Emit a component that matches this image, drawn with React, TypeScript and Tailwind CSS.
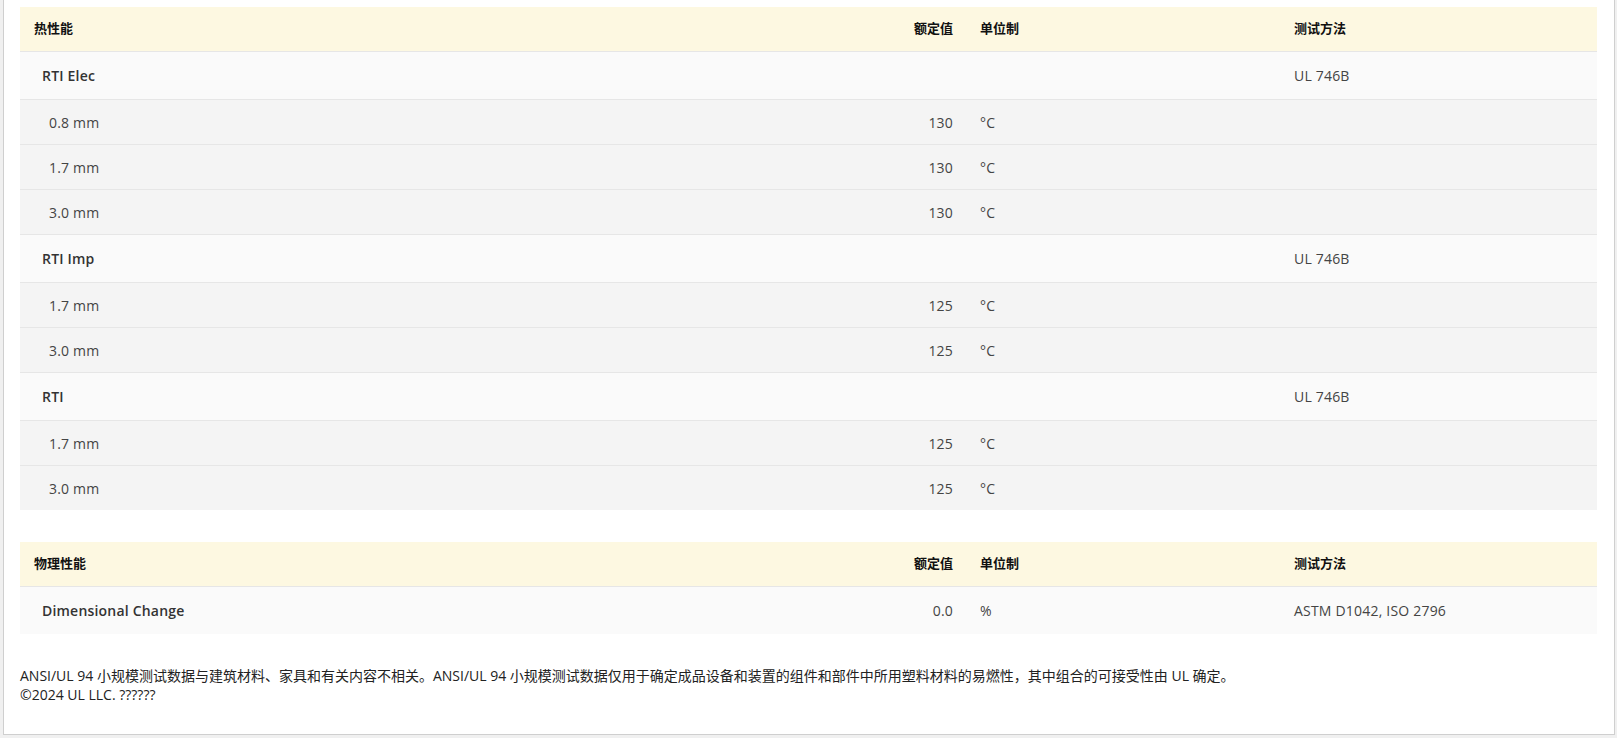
import React from "react";

type Row = { kind: "g" | "s"; label: string; val?: string; unit?: string; method?: string };

const t1: Row[] = [
  { kind: "g", label: "RTI Elec", method: "UL 746B" },
  { kind: "s", label: "0.8 mm", val: "130", unit: "°C" },
  { kind: "s", label: "1.7 mm", val: "130", unit: "°C" },
  { kind: "s", label: "3.0 mm", val: "130", unit: "°C" },
  { kind: "g", label: "RTI Imp", method: "UL 746B" },
  { kind: "s", label: "1.7 mm", val: "125", unit: "°C" },
  { kind: "s", label: "3.0 mm", val: "125", unit: "°C" },
  { kind: "g", label: "RTI", method: "UL 746B" },
  { kind: "s", label: "1.7 mm", val: "125", unit: "°C" },
  { kind: "s", label: "3.0 mm", val: "125", unit: "°C" },
];
const t2: Row[] = [
  { kind: "g", label: "Dimensional Change", val: "0.0", unit: "%", method: "ASTM D1042, ISO 2796" },
];

function Table({ title, rows }: { title: string; rows: Row[] }) {
  return (
    <div className="w-[1577px]">
      <div className="flex h-[44px] items-center bg-[#fdf8e1] text-[13px] font-semibold text-[#111]">
        <div className="flex-1 pl-[14px]">{title}</div>
        <div className="w-[136px] pr-3 text-right">额定值</div>
        <div className="w-[317px] pl-[15px]">单位制</div>
        <div className="w-[315px] pl-3">测试方法</div>
      </div>
      {rows.map((r, i) => (
        <div
          key={i}
          className={
            "flex items-center border-t border-[#e6e6e6] text-[14px] tracking-[0.2px] text-[#444] " +
            (r.kind === "g" ? "h-[48px] bg-[#fafafa]" : "h-[45px] bg-[#f4f4f4]")
          }
        >
          <div className={r.kind === "g" ? "flex-1 pl-[22px] font-semibold text-[#333]" : "flex-1 pl-[29px]"}>{r.label}</div>
          <div className="w-[136px] pr-3 text-right">{r.val}</div>
          <div className="w-[317px] pl-[15px]">{r.unit}</div>
          <div className="w-[315px] pl-3">{r.method}</div>
        </div>
      ))}
    </div>
  );
}

export default function App() {
  return (
    <div className="min-h-[738px] bg-[#f0f0f0] pl-[3px] pr-[2px]" style={{ fontFamily: '"Open Sans", "Noto Sans CJK SC", sans-serif' }}>
      <div className="h-[735px] border border-t-0 border-[#cfcfcf] bg-white pl-[16px] pt-[7px]">
        <Table title="热性能" rows={t1} />
        <div className="h-[32px]" />
        <Table title="物理性能" rows={t2} />
        <div className="mt-[32px] text-[14px] leading-[19px] text-[#222]">
          <div>ANSI/UL 94 小规模测试数据与建筑材料、家具和有关内容不相关。ANSI/UL 94 小规模测试数据仅用于确定成品设备和装置的组件和部件中所用塑料材料的易燃性，其中组合的可接受性由 UL 确定。</div>
          <div>©2024 UL LLC. ??????</div>
        </div>
      </div>
    </div>
  );
}
